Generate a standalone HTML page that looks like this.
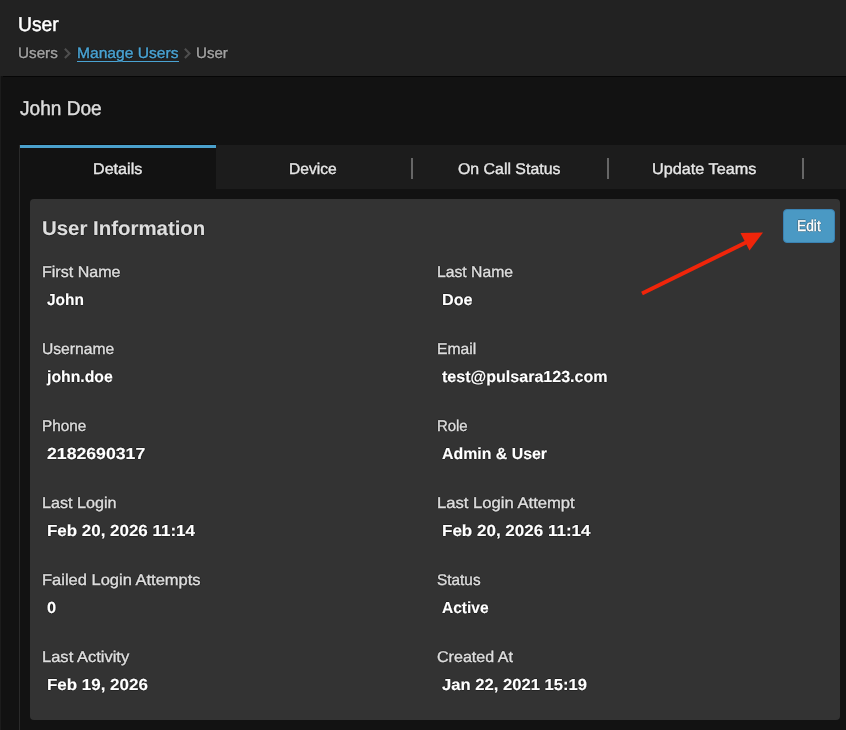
<!DOCTYPE html>
<html><head><meta charset="utf-8">
<style>
*{margin:0;padding:0;box-sizing:border-box}
html,body{width:846px;height:730px;overflow:hidden;background:#121212;font-family:"Liberation Sans",sans-serif}
#wrap{position:absolute;left:0;top:0;width:846px;height:730px;will-change:transform}
.b{position:absolute}
.t{position:absolute;white-space:nowrap;line-height:1;transform-origin:0 0;text-rendering:geometricPrecision;-webkit-text-stroke:0.4px currentColor;text-shadow:1px 0 0 rgba(0,0,0,.3),-1px 0 0 rgba(0,0,0,.3),0 1px 0 rgba(0,0,0,.3),0 -1px 0 rgba(0,0,0,.3)}
.bd{font-weight:bold;-webkit-text-stroke-width:0.15px}
</style></head><body>
<div id="wrap">
<div class="b" style="left:0;top:0;width:846px;height:76px;background:#222"></div>
<div class="b" style="left:3px;top:76px;width:843px;height:1px;background:#060606"></div>
<div class="b" style="left:0;top:76px;width:1px;height:654px;background:#1c1c1c"></div>

<div class="b" style="left:20px;top:145px;width:826px;height:44px;background:#1c1c1c"></div>
<div class="b" style="left:19px;top:145px;width:1px;height:585px;background:#2a2a2a"></div>
<div class="b" style="left:20px;top:144px;width:196px;height:1px;background:#080808"></div>
<div class="b" style="left:20px;top:145px;width:196px;height:44px;background:#121212;border-top:3px solid #4aa0cc"></div>
<div class="b" style="left:411px;top:158px;width:2px;height:21px;background:#666"></div>
<div class="b" style="left:607px;top:158px;width:2px;height:21px;background:#666"></div>
<div class="b" style="left:802px;top:158px;width:2px;height:21px;background:#666"></div>

<div class="b" style="left:30px;top:199px;width:810px;height:521px;background:#333;border-radius:4px"></div>
<div class="b" style="left:783px;top:209px;width:52px;height:34px;background:#4a99c4;border:1px solid #3a82b3;border-radius:4px"></div>

<div class="b" style="left:77px;top:61px;width:102px;height:1px;background:#4aa3d3"></div>
<svg class="b" style="left:0;top:0" width="846" height="730">
<polygon points="64.1,49.6 65.6,48.1 71,53.45 65.6,58.8 64.1,57.3 68,53.45" fill="#4e4e4e"/>
<polygon points="184.1,49.6 185.6,48.1 191,53.45 185.6,58.8 184.1,57.3 188,53.45" fill="#4e4e4e"/>
<line x1="642" y1="293.5" x2="750" y2="240.5" stroke="#f0250a" stroke-width="4"/>
<polygon points="763,232.5 740.5,233 749.5,250.5" fill="#f0250a"/>
</svg>
<div class="t n" style="left:18.14px;top:15px;font-size:20px;color:#ffffff;transform:scaleX(0.9627);-webkit-text-stroke-width:0.5px;">User</div>
<div class="t n" style="left:17.88px;top:46px;font-size:15px;color:#a3a3a3;transform:scaleX(1.0164);">Users</div>
<div class="t n" style="left:76.82px;top:46px;font-size:15px;color:#4aa3d3;transform:scaleX(1.0407);">Manage Users</div>
<div class="t n" style="left:196.34px;top:46px;font-size:15px;color:#a3a3a3;transform:scaleX(1.0065);">User</div>
<div class="t n" style="left:19.77px;top:99px;font-size:20px;color:#dcdcdc;transform:scaleX(0.9530);-webkit-text-stroke-width:0.5px;">John Doe</div>
<div class="t n" style="left:92.55px;top:162px;font-size:15.5px;color:#e6e6e6;transform:scaleX(1.0405);">Details</div>
<div class="t n" style="left:288.77px;top:162px;font-size:15.5px;color:#e6e6e6;transform:scaleX(1.0052);">Device</div>
<div class="t n" style="left:458.01px;top:162px;font-size:15.5px;color:#e6e6e6;transform:scaleX(1.0247);">On Call Status</div>
<div class="t n" style="left:652.15px;top:162px;font-size:15.5px;color:#e6e6e6;transform:scaleX(1.0465);">Update Teams</div>
<div class="t bd" style="left:42.19px;top:219px;font-size:20px;color:#dedede;transform:scaleX(1.0205);">User Information</div>
<div class="t n" style="left:796.63px;top:219px;font-size:15.5px;color:#ffffff;transform:scaleX(0.8892);">Edit</div>
<div class="t n" style="left:42.30px;top:265px;font-size:15.5px;color:#dedede;transform:scaleX(1.0351);">First Name</div>
<div class="t bd" style="left:46.80px;top:293px;font-size:16px;color:#ffffff;transform:scaleX(0.9668);">John</div>
<div class="t n" style="left:42.30px;top:342px;font-size:15.5px;color:#dedede;transform:scaleX(1.0093);">Username</div>
<div class="t bd" style="left:46.80px;top:370px;font-size:16px;color:#ffffff;transform:scaleX(0.9868);">john.doe</div>
<div class="t n" style="left:42.30px;top:419px;font-size:15.5px;color:#dedede;transform:scaleX(0.9875);">Phone</div>
<div class="t bd" style="left:46.80px;top:447px;font-size:16px;color:#ffffff;transform:scaleX(1.1040);">2182690317</div>
<div class="t n" style="left:42.30px;top:496px;font-size:15.5px;color:#dedede;transform:scaleX(1.0423);">Last Login</div>
<div class="t bd" style="left:46.80px;top:524px;font-size:16px;color:#ffffff;transform:scaleX(1.0591);">Feb 20, 2026 11:14</div>
<div class="t n" style="left:42.30px;top:573px;font-size:15.5px;color:#dedede;transform:scaleX(1.0641);">Failed Login Attempts</div>
<div class="t bd" style="left:46.80px;top:601px;font-size:16px;color:#ffffff;transform:scaleX(1.0284);">0</div>
<div class="t n" style="left:42.30px;top:650px;font-size:15.5px;color:#dedede;transform:scaleX(1.0655);">Last Activity</div>
<div class="t bd" style="left:46.80px;top:678px;font-size:16px;color:#ffffff;transform:scaleX(1.0595);">Feb 19, 2026</div>
<div class="t n" style="left:437.30px;top:265px;font-size:15.5px;color:#dedede;transform:scaleX(1.0150);">Last Name</div>
<div class="t bd" style="left:441.80px;top:293px;font-size:16px;color:#ffffff;transform:scaleX(1.0097);">Doe</div>
<div class="t n" style="left:437.30px;top:342px;font-size:15.5px;color:#dedede;transform:scaleX(1.0125);">Email</div>
<div class="t bd" style="left:441.80px;top:370px;font-size:16px;color:#ffffff;transform:scaleX(1.0035);">test@pulsara123.com</div>
<div class="t n" style="left:437.30px;top:419px;font-size:15.5px;color:#dedede;transform:scaleX(0.9616);">Role</div>
<div class="t bd" style="left:441.80px;top:447px;font-size:16px;color:#ffffff;transform:scaleX(0.9926);">Admin &amp; User</div>
<div class="t n" style="left:437.30px;top:496px;font-size:15.5px;color:#dedede;transform:scaleX(1.0728);">Last Login Attempt</div>
<div class="t bd" style="left:441.80px;top:524px;font-size:16px;color:#ffffff;transform:scaleX(1.0637);">Feb 20, 2026 11:14</div>
<div class="t n" style="left:437.30px;top:573px;font-size:15.5px;color:#dedede;transform:scaleX(0.9917);">Status</div>
<div class="t bd" style="left:441.80px;top:601px;font-size:16px;color:#ffffff;transform:scaleX(0.9707);">Active</div>
<div class="t n" style="left:437.30px;top:650px;font-size:15.5px;color:#dedede;transform:scaleX(1.0374);">Created At</div>
<div class="t bd" style="left:441.80px;top:678px;font-size:16px;color:#ffffff;transform:scaleX(1.0382);">Jan 22, 2021 15:19</div>
</div>
</body></html>
